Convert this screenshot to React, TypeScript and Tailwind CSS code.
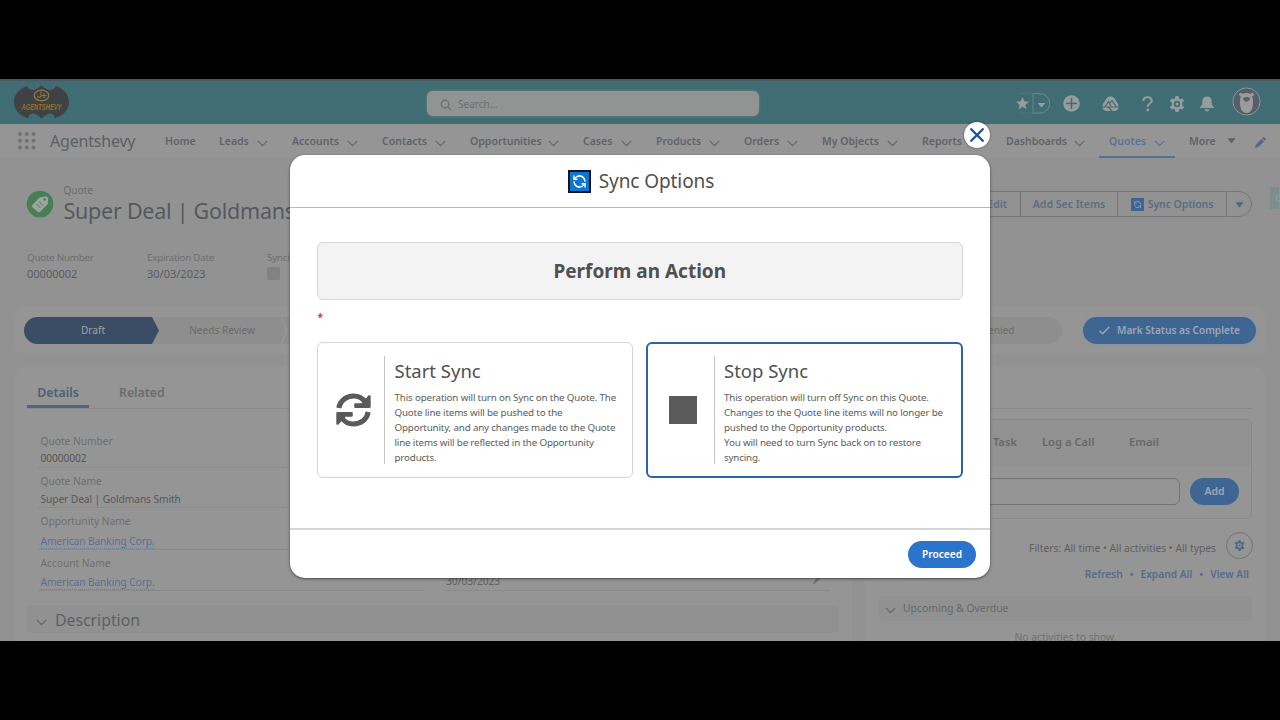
import type { ReactNode } from "react";

const navItems = [
  { label: "Home", width: "w-[54px]", menu: false },
  { label: "Leads", width: "w-[73px]", menu: true },
  { label: "Accounts", width: "w-[90px]", menu: true },
  { label: "Contacts", width: "w-[88px]", menu: true },
  { label: "Opportunities", width: "w-[113px]", menu: true },
  { label: "Cases", width: "w-[73px]", menu: true },
  { label: "Products", width: "w-[88px]", menu: true },
  { label: "Orders", width: "w-[78px]", menu: true },
  { label: "My Objects", width: "w-[100px]", menu: true },
  { label: "Reports", width: "w-[84px]", menu: true },
  { label: "Dashboards", width: "w-[103px]", menu: true },
];

const summary = [
  { label: "Quote Number", value: "00000002" },
  { label: "Expiration Date", value: "30/03/2023" },
];

const details = [
  { label: "Quote Number", value: "00000002", link: false, height: "h-[40px]", gap: "mt-[2px]" },
  { label: "Quote Name", value: "Super Deal | Goldmans Smith", link: false, height: "h-[40px]", gap: "mt-[3px]" },
  { label: "Opportunity Name", value: "American Banking Corp.", link: true, height: "h-[42px]", gap: "mt-[5px]" },
  { label: "Account Name", value: "American Banking Corp.", link: true, height: "h-[41px]", gap: "mt-[4px]" },
];

export default function App() {
  return (
    <div className="h-[720px] w-[1280px] overflow-hidden bg-black pt-[79px] font-['Noto_Sans','Open_Sans',sans-serif]">
      <div className="relative flex h-[562px] flex-col overflow-hidden bg-[#929292] text-[#5c5f65]">
        <GlobalHeader />
        <NavBar />
        <RecordHeader />
        <StatusPath />
        <div className="mt-[12px] flex gap-[13px] px-[14px]">
          <DetailsCard />
          <ActivityCard />
        </div>
        <SyncModal />
      </div>
    </div>
  );
}

function GlobalHeader() {
  return (
    <header className="flex h-[45px] shrink-0 items-center border-t-2 border-[#4b5a61] bg-[#406c73] pt-[2px] pl-[13px]">
      <Logo />
      <div className="ml-[357px] flex h-[25px] w-[332px] items-center gap-[6px] rounded-[6px] bg-[#929494] pl-[13px] text-[10px] text-[#6d6f71] shadow-[0_0_3px_#6f8a8e]">
        <svg className="mt-[2px]" width="12" height="12" viewBox="0 0 12 12" fill="none" stroke="#6b6d6f" strokeWidth="1.2">
          <circle cx="5" cy="5" r="3.8" />
          <path d="M7.8 7.8l3.2 3.2" />
        </svg>
        <span className="mt-px">Search...</span>
      </div>
      <div className="ml-[257px] flex items-center">
        <svg width="36" height="21" viewBox="0 0 36 21">
          <path d="M6.5 4l1.8 4.3 4.7.4-3.6 3 1.1 4.6-4-2.5-4 2.5 1.1-4.6L0 8.7l4.7-.4z" fill="#979c9d" />
          <path d="M2 .7h22a9.7 9.7 0 0 1 0 19.4H2" fill="none" stroke="#527b81" strokeWidth=".8" />
          <path d="M17 .7h7a9.7 9.7 0 0 1 0 19.4h-7z" fill="none" stroke="#6b8a8e" strokeWidth=".9" />
          <path d="M21.5 10h8l-4 4.5z" fill="#979c9d" />
        </svg>
        <svg className="ml-[11px]" width="17" height="17" viewBox="0 0 17 17">
          <circle cx="8.5" cy="8.5" r="8.3" fill="#979c9d" />
          <path d="M8.5 3v11M3 8.5h11" stroke="#406c73" strokeWidth="1.5" />
        </svg>
        <svg className="ml-[22px]" width="17" height="16" viewBox="0 0 17 16">
          <path
            d="M8.5.5C11.5.5 13 2.5 14 5c1.600 1.500 2.500 3.500 2.500 5.500H.5C.5 8.500 1.400 6.500 3 5 4 2.500 5.500.5 8.500.5zM.8 11.500h5L9 15H4C2.300 15 1 13.500.8 11.500zM7.500 11.500h9c-.4 2-1.600 3.500-3.500 3.500h-2.300z"
            fill="#979c9d"
          />
          <path d="M3 10.500l3.500-5 2.500 5M8 7l2-2.500 4 6" fill="none" stroke="#406c73" strokeWidth="1.200" />
        </svg>
        <svg className="ml-[23px]" width="11" height="16" viewBox="0 0 11 16">
          <path
            d="M1.300 5C1.300 2.500 3 1.200 5.500 1.200S9.700 2.700 9.700 4.700C9.700 7.500 5.700 7.500 5.700 10.800"
            fill="none"
            stroke="#979c9d"
            strokeWidth="2.100"
          />
          <circle cx="5.700" cy="14" r="1.400" fill="#979c9d" />
        </svg>
        <Gear className="ml-[16px]" size={16} color="#979c9d" />
        <svg className="ml-[14px]" width="16" height="16" viewBox="0 0 16 16" fill="#979c9d">
          <path d="M8 .5c3 0 4.700 2 4.700 4.800v3.200L15.500 12H.5l2.800-3.500V5.300C3.300 2.500 5 .5 8 .5zM5.700 13.300h4.600a2.300 2.300 0 0 1-4.600 0z" />
        </svg>
        <svg className="-mt-[4px] ml-[17px]" width="29" height="29" viewBox="0 0 29 29">
          <circle cx="14.500" cy="14.500" r="13.600" fill="#555f69" stroke="#8b9697" />
          <circle cx="8.800" cy="7.500" r="1.800" fill="#999" />
          <circle cx="20.200" cy="7.500" r="1.800" fill="#999" />
          <path d="M14.500 6c-4.500 0-6.500 3.500-6.500 8 0 5 .5 12 6.500 12S21 19 21 14c0-4.500-2-8-6.500-8z" fill="#9b9b9b" />
          <path d="M11 11.500c0-2 7-2 7 0 0 1.800-2 3.200-3.500 3.200s-3.500-1.400-3.500-3.200z" fill="#5d6166" />
        </svg>
      </div>
    </header>
  );
}

function Logo() {
  return (
    <svg width="57" height="34" viewBox="0 0 57 34" className="-mt-[3px]">
      <path
        d="M14 1Q16 5.500 21 5 25 4 28.500.5 32 4 36 5 41 5.500 43 1C51 4 56 9.500 56 17S51 30 42 33.500Q41 28.500 37 28.500q-4 .5-8.500 5Q24 29 20 28.500q-4 0-5 5C6 30 1 24.500 1 17S6 4 14 1z"
        fill="#3f4145"
      />
      <ellipse cx="28.500" cy="10.500" rx="7.300" ry="5.300" fill="none" stroke="#8f7f36" strokeWidth="1.200" />
      <path d="M28 6.500v5.500h-4M29 10.500h4.500M31 8.500v4.500" fill="none" stroke="#8f7f36" strokeWidth="1" />
      <text
        x="28.500"
        y="24.800"
        textAnchor="middle"
        textLength="40"
        lengthAdjust="spacingAndGlyphs"
        className="font-['Liberation_Sans',sans-serif] text-[9.500px] font-bold italic"
        fill="#94702f"
      >
        AGENTSHEVY
      </text>
    </svg>
  );
}

function NavBar() {
  return (
    <nav className="flex h-[34px] shrink-0 items-center bg-[#959595] pl-[18px] text-[10.5px] font-semibold text-[#5f626a]">
      <svg width="18" height="18" viewBox="0 0 18 18" fill="#727272">
        {[2, 8.8, 15.5].map((y) => [2, 8.8, 15.5].map((x) => <circle key={`${x}-${y}`} cx={x} cy={y} r="2" />))}
      </svg>
      <span className="ml-[14px] w-[115px] text-[16px] font-normal tracking-[-0.2px] whitespace-nowrap text-[#5c5f65]">
        Agentshevy
      </span>
      {navItems.map((item) => (
        <div key={item.label} className={`flex shrink-0 items-center justify-between pt-[2px] pr-[24px] ${item.width}`}>
          {item.label}
          {item.menu && <Chevron />}
        </div>
      ))}
      <div className="-ml-[10px] flex h-[33px] w-[76px] items-center justify-between border-b-2 border-[#54708f] px-[10px] pt-[3px] text-[#5b7290]">
        Quotes
        <Chevron color="#5b7290" />
      </div>
      <span className="mt-[2px] ml-[14px] w-[38px]">More</span>
      <Caret />
      <svg className="mt-[3px] ml-[19px]" width="11" height="11" viewBox="0 0 12 12" fill="#526a83">
        <path d="M0 12l1-3.700L7 2.200l2.800 2.800-6 6zM7.800 1.500L9 .3q.5-.4 1 0l1.700 1.700q.4.5 0 1l-1.200 1.200z" />
      </svg>
    </nav>
  );
}

function RecordHeader() {
  return (
    <section className="h-[149px] shrink-0 pt-[26px]">
      <div className="flex h-[40px] items-start">
        <svg className="mt-[6px] ml-[26px]" width="28" height="28" viewBox="0 0 28 28">
          <circle cx="14" cy="14" r="13.300" fill="#467f56" />
          <path d="M6 15.500l7.500-8 6.500-1.200 2.200 1.500-.4 6.300-7.800 8q-1 .8-2 0l-6-5q-.8-.8 0-1.600z" fill="#9ba59d" />
          <path d="M10.500 14l4 4M13 11.500l4 4" stroke="#467f56" />
          <circle cx="18.500" cy="9.500" r="1.200" fill="#467f56" />
        </svg>
        <div className="ml-[9.500px] w-[240px]">
          <p className="text-[10px] leading-[13px] text-[#6c6c6c]">Quote</p>
          <h1 className="mt-px text-[21.500px] leading-[26px] tracking-[-0.250px] whitespace-nowrap text-[#55595e]">
            Super Deal | Goldmans Smith
          </h1>
        </div>
        <div className="mt-[7px] ml-[615.500px] flex h-[26px] w-[333px] items-stretch justify-end text-[10.500px] font-semibold text-[#5a6d82]">
          <span className="flex w-[101px] items-center justify-end border border-r-0 border-[#757575] pt-px pr-[13px]">Edit</span>
          <span className="flex w-[97px] items-center justify-center border border-r-0 border-[#757575] pt-px">Add Sec Items</span>
          <span className="flex w-[109px] items-center justify-center gap-[4px] border border-r-0 border-[#757575] pt-px tracking-[-0.100px]">
            <SyncTile size={13} border="#3f6595" fill="#3f6595" stroke="#95a1ad" />
            Sync Options
          </span>
          <span className="flex w-[26px] items-center justify-center rounded-r-full border border-[#757575] pt-px text-[#4b6887]">
            <Caret />
          </span>
        </div>
        <div className="mt-[3px] ml-[18px] flex h-[22px] w-[9px] items-center justify-end bg-[#7d8c8f]">
          <svg width="5" height="8" viewBox="0 0 5 8" fill="none" stroke="#8f9b9d" strokeWidth="1.300">
            <path d="M4.500 1L1.500 4l3 3" />
          </svg>
        </div>
      </div>
      <div className="mt-[26px] ml-[27px] flex">
        {summary.map((field) => (
          <div key={field.label} className="w-[120px]">
            <p className="text-[9.800px] leading-[15px] tracking-[-0.250px] text-[#6e6e6e]">{field.label}</p>
            <p className="mt-px text-[11px] leading-[16px] text-[#595d62]">{field.value}</p>
          </div>
        ))}
        <div>
          <p className="text-[9.800px] leading-[15px] tracking-[-0.250px] text-[#6e6e6e]">Syncing</p>
          <div className="mt-[2px] h-[13px] w-[13px] rounded-[2px] bg-[#828282]" />
        </div>
      </div>
    </section>
  );
}

function StatusPath() {
  return (
    <section className="mx-[14px] flex h-[47px] shrink-0 items-center rounded-[10px] bg-[#959595] px-[10px] text-[10.100px]">
      <div className="flex h-[27px] w-[1038px] overflow-hidden rounded-full bg-[#8e8e8e]">
        <div className="flex w-[135px] items-center justify-center bg-[#3b4d65] text-[#a0a4a9] [clip-path:polygon(0_0,128px_0,100%_50%,128px_100%,0_100%)]">
          <span className="mt-px mr-[-3px]">Draft</span>
        </div>
        <div className="flex w-[130px] items-center justify-center pt-px pr-[4px] text-[#6c6c6c]">Needs Review</div>
        <svg width="8" height="27" viewBox="0 0 8 27" className="-ml-[8px]" fill="none" stroke="#959595" strokeWidth="2">
          <path d="M0 0l6 13.500L0 27" />
        </svg>
        <div className="ml-auto flex w-[131px] items-center justify-center pt-px text-[#6c6c6c]">
          <span className="-mr-[2px]">Denied</span>
        </div>
      </div>
      <div className="ml-[21px] flex h-[27px] w-[173px] items-center justify-center gap-[7px] rounded-full bg-[#3f6592] font-semibold text-[#9ba8b8] shadow-[0_0_4px_#8794a3]">
        <svg width="11" height="9" viewBox="0 0 11 9" fill="none" stroke="#9ba8b8" strokeWidth="1.400">
          <path d="M.7 4.700l3 3L10.300.8" />
        </svg>
        <span className="mt-px">Mark Status as Complete</span>
      </div>
    </section>
  );
}

function DetailsCard() {
  return (
    <section className="h-[300px] w-[838px] rounded-t-[12px] bg-[#959595] px-[13px]">
      <div className="flex h-[43px] items-end border-b border-[#8a8a8a] text-[12.300px] font-semibold">
        <span className="flex h-[32px] w-[62px] justify-center border-b-[3px] border-[#4e6781] pt-[8px] text-[#4b5f77]">Details</span>
        <span className="flex h-[32px] pt-[8px] pl-[30px] text-[#6c6c6c]">Related</span>
      </div>
      <div className="flex gap-[20px] pt-[19px] pl-[11px]">
        <div className="w-[386px]">
          {details.map((field) => (
            <div key={field.label} className={`${field.height} border-b border-[#8a8a8a] pl-[2.500px]`}>
              <p className="pt-[6px] text-[10.200px] leading-[14px] text-[#6e6e6e]">{field.label}</p>
              <p className={`${field.gap} text-[10.200px] leading-[16px] tracking-[-0.080px]`}>
                {field.link ? (
                  <span className="border-b border-dotted border-[#6a7f98] text-[#5a7190]">{field.value}</span>
                ) : (
                  <span className="text-[#555]">{field.value}</span>
                )}
              </p>
            </div>
          ))}
        </div>
        <div className="flex h-[163px] w-[386px] items-end justify-between border-b border-[#8a8a8a] px-[2px] pb-px text-[10.200px] text-[#606060]">
          30/03/2023
          <svg className="mr-[7px] mb-[4px]" width="8" height="10" viewBox="0 0 10 10" fill="#707070">
            <path d="M0 10l1-3L7 1l2 2-6 6z" />
          </svg>
        </div>
      </div>
      <div className="mt-[14px] flex h-[28px] items-center gap-[8px] rounded-[5px] bg-[#919191] pt-[3px] pl-[9px] text-[15.800px] text-[#5d6066]">
        <Chevron />
        Description
      </div>
    </section>
  );
}

function ActivityCard() {
  return (
    <section className="h-[300px] w-[401px] rounded-t-[12px] bg-[#959595] px-[14px]">
      <div className="h-[43px] border-b border-[#8a8a8a]" />
      <div className="mt-[10px] h-[100px] rounded-[5px] border border-[#898989]">
        <div className="flex h-[46px] items-center bg-[#929292] pb-px text-[11.200px] font-semibold text-[#686868]">
          <span className="w-[137px] text-right">New Task</span>
          <span className="ml-[25px] w-[87px]">Log a Call</span>
          <span>Email</span>
        </div>
        <div className="flex items-center gap-[10px] pt-[12px] pl-[14px]">
          <div className="h-[27px] w-[286px] rounded-[6px] border border-[#727272]" />
          <span className="flex h-[27px] w-[49px] items-center justify-center rounded-full bg-[#3f6592] pt-px text-[10.500px] font-semibold text-[#9ba8b8]">
            Add
          </span>
        </div>
      </div>
      <div className="mt-[13px] flex h-[27px] items-center justify-end gap-[10px] text-[10.300px] whitespace-nowrap text-[#606060]">
        <span className="mt-[6px]">Filters: All time • All activities • All types</span>
        <span className="-mr-px flex h-[27px] w-[27px] items-center justify-center rounded-full border border-[#747474]">
          <Gear size={11} color="#4d6a8a" />
        </span>
      </div>
      <div className="mt-[7px] flex h-[18px] items-center justify-end gap-[7px] pr-[3px] text-[10.200px] font-semibold text-[#556c8b]">
        <span>Refresh</span>
        <span>•</span>
        <span>Expand All</span>
        <span>•</span>
        <span>View All</span>
      </div>
      <div className="mt-[12px] flex h-[25px] items-center gap-[7px] rounded-[5px] bg-[#919191] pl-[6px] text-[10.400px] text-[#66686c]">
        <Chevron />
        Upcoming &amp; Overdue
      </div>
      <p className="mt-[8px] text-center text-[10.300px] leading-[16px] text-[#707070]">No activities to show.</p>
    </section>
  );
}

function SyncModal() {
  return (
    <div className="absolute top-[76px] left-[290px] flex h-[423px] w-[700px] flex-col rounded-[15px] bg-white text-[#505050] shadow-[0_1px_3px_rgba(0,0,0,0.5)]">
      <button className="absolute top-[-33px] right-[0.500px] flex h-[26px] w-[26px] items-center justify-center rounded-full bg-white shadow-[0_0_2px_rgba(0,0,0,0.6)]">
        <svg width="14" height="14" viewBox="0 0 14 14" stroke="#1b5297" strokeWidth="2.300" strokeLinecap="round">
          <path d="M1.200 1.200l11.600 11.600M12.800 1.200L1.200 12.800" />
        </svg>
      </button>
      <div className="flex h-[53px] items-center justify-center gap-[8px] border-b border-[#b9b9b9] pl-[2px] text-[19px] tracking-[-0.080px]">
        <SyncTile size={23} border="#0c1520" fill="#0b76d8" stroke="#ffffff" />
        <span className="mt-px">Sync Options</span>
      </div>
      <div className="flex-1 pt-[34px] pr-[27px] pl-[26.500px]">
        <div className="flex h-[58px] items-center justify-center rounded-[6px] border border-[#d6d6d6] bg-[#f3f3f3] pt-px text-[19px] font-bold">
          Perform an Action
        </div>
        <p className="mt-[7px] h-[35px] pl-px text-[10px] leading-[20px] font-semibold text-[#c4262e]">*</p>
        <div className="flex gap-[13px]">
          <OptionCard title="Start Sync" frame="border border-[#d4d4d4]" pad="pl-[5px]" icon={<SyncArrows />}>
            This operation will turn on Sync on the Quote. The
            <br />
            Quote line items will be pushed to the
            <br />
            Opportunity, and any changes made to the Quote
            <br />
            line items will be reflected in the Opportunity
            <br />
            products.
          </OptionCard>
          <OptionCard
            title="Stop Sync"
            frame="border-2 border-[#2a65a8]"
            pad="-ml-px pl-[6px]"
            icon={<div className="h-[28px] w-[28px] bg-[#5a5a5a]" />}
          >
            This operation will turn off Sync on this Quote.
            <br />
            Changes to the Quote line items will no longer be
            <br />
            pushed to the Opportunity products.
            <br />
            You will need to turn Sync back on to restore
            <br />
            syncing.
          </OptionCard>
        </div>
      </div>
      <div className="flex h-[50px] items-center justify-end border-t-2 border-[#d6d6d6] pr-[14px]">
        <button className="h-[27px] w-[68px] rounded-full bg-[#2a74cb] pt-px text-[10.200px] font-semibold text-white">Proceed</button>
      </div>
    </div>
  );
}

function OptionCard({
  title,
  frame,
  pad,
  icon,
  children,
}: {
  title: string;
  frame: string;
  pad: string;
  icon: ReactNode;
  children: ReactNode;
}) {
  return (
    <div className={`flex h-[136px] w-[316.500px] items-center rounded-[6px] ${frame}`}>
      <div className={`flex w-[66.500px] shrink-0 justify-center ${pad}`}>{icon}</div>
      <div className="h-[108px] border-l border-[#c4c4c4] pl-[9.500px] whitespace-nowrap">
        <h2 className="text-[18.500px] leading-[29px]">{title}</h2>
        <p className="mt-[5px] text-[9.800px] leading-[15px] tracking-[-0.170px] text-[#5c5c5c]">{children}</p>
      </div>
    </div>
  );
}

function SyncArrows() {
  return (
    <svg width="35" height="34" viewBox="0 0 35 34">
      <path
        d="M2.800 15C4 7.500 10.500 3 17.500 3c5 0 9 2 11.500 6M32.200 19C31 26.500 24.500 31 17.500 31c-5 0-9-2-11.500-6"
        fill="none"
        stroke="#5a5a5a"
        strokeWidth="5"
      />
      <path
        d="M34.700 2.500v11.200q0 1.300-1.300 1.300H19.500q-1.300 0-1.300-1.200v-2.300q0-1.200 1.300-1.200h6l7.200-8zM.3 31.500V20.300q0-1.300 1.300-1.300h13.900q1.300 0 1.300 1.200v2.300q0 1.200-1.300 1.200h-6l-7.200 8z"
        fill="#5a5a5a"
      />
    </svg>
  );
}

function SyncTile({ size, border, fill, stroke }: { size: number; border: string; fill: string; stroke: string }) {
  return (
    <svg width={size} height={size} viewBox="0 0 23 23" fill="none">
      <rect x="1" y="1" width="21" height="21" fill={fill} stroke={border} strokeWidth="2" />
      <path
        d="M8.500 6.900c2.700-1.500 5.800-.9 7.400 1.300.7 1 1 2.200.9 3.400M14.500 16.100c-2.700 1.500-5.800.9-7.400-1.300-.7-1-1-2.200-.9-3.400"
        stroke={stroke}
        strokeWidth="1.500"
      />
      <path d="M6 5.500v3.800h3.500M17 17.500v-3.800h-3.500" stroke={stroke} strokeWidth="1.400" />
      <path d="M6 9.300l2.500-2.400M17 13.700l-2.500 2.400" stroke={stroke} strokeWidth="1.300" />
    </svg>
  );
}

function Gear({ size, color, className }: { size: number; color: string; className?: string }) {
  return (
    <svg className={className} width={size} height={size} viewBox="0 0 16 16" fill={color}>
      <path
        fillRule="evenodd"
        d="M6.500 0h3l.5 2.400 1.300.8 2.300-.8 1.500 2.600-1.800 1.600v2.800l1.800 1.600-1.500 2.600-2.300-.8-1.300.8-.5 2.400h-3L6 13.600l-1.300-.8-2.300.8L.9 11l1.800-1.600V6.600L.9 5l1.500-2.600 2.300.8L6 2.400zM8 4.800a3.200 3.200 0 1 0 0 6.400 3.200 3.200 0 0 0 0-6.400z"
      />
      <circle cx="8" cy="8" r="1.500" />
    </svg>
  );
}

function Chevron({ color = "#63666b" }: { color?: string }) {
  return (
    <svg className="mt-[3px]" width="11" height="7" viewBox="0 0 11 7" fill="none" stroke={color} strokeWidth="1.200">
      <path d="M.8.8l4.700 4.800L10.200.8" />
    </svg>
  );
}

function Caret() {
  return (
    <svg width="9" height="6" viewBox="0 0 9 6" fill="currentColor">
      <path d="M.3.3h8.400L4.500 5.500z" />
    </svg>
  );
}
